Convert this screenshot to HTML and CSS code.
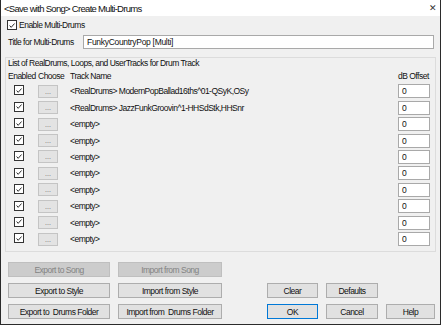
FILE: index.html
```html
<!DOCTYPE html>
<html lang="en">
<head>
    <meta charset="UTF-8">
    <title>Create Multi-Drums</title>
    <link rel="stylesheet" href="styles.css">
</head>
<body>
    <div class="window">
        <div class="titlebar">
            <span>&lt;Save with Song&gt; Create Multi-Drums</span>
            <span class="close">&#x2715;</span>
        </div>
        <div class="content">
            <div class="enable-row">
                <span class="check"><svg viewBox="0 0 10 10" width="10" height="10"><path d="M2 5 L4 7.3 L8.2 2.5" fill="none" stroke="#222" stroke-width="1.2"/></svg></span>
                <span>Enable Multi-Drums</span>
            </div>
            <div class="title-row">
                <span class="title-label">Title for Multi-Drums</span>
                <div class="field wide">FunkyCountryPop [Multi]</div>
            </div>
            <div class="group">
                <div class="group-label">List of RealDrums, Loops, and UserTracks for Drum Track</div>
                <div class="track-grid" id="track-grid">
                    <div class="head">Enabled</div>
                    <div class="head">Choose</div>
                    <div class="head">Track Name</div>
                    <div class="head">dB Offset</div>
                </div>
            </div>
            <div class="buttons">
                <button class="btn disabled">Export to Song</button>
                <button class="btn disabled">Import from Song</button>
                <span></span><span></span><span></span><span></span>

                <button class="btn">Export to Style</button>
                <button class="btn">Import from Style</button>
                <span></span>
                <button class="btn">Clear</button>
                <button class="btn">Defaults</button>
                <span></span>

                <button class="btn">Export to&nbsp; Drums Folder</button>
                <button class="btn">Import from&nbsp; Drums Folder</button>
                <span></span>
                <button class="btn default">OK</button>
                <button class="btn">Cancel</button>
                <button class="btn">Help</button>
            </div>
        </div>
    </div>

    <script>
        const tracks = [
            "<RealDrums> ModernPopBallad16ths^01-QSyK,OSy",
            "<RealDrums> JazzFunkGroovin^1-HHSdStk,HHSnr",
            "<empty>", "<empty>", "<empty>", "<empty>",
            "<empty>", "<empty>", "<empty>", "<empty>"
        ];
        const grid = document.getElementById("track-grid");
        const checkSvg = '<svg viewBox="0 0 10 10" width="10" height="10"><path d="M2 5 L4 7.3 L8.2 2.5" fill="none" stroke="#222" stroke-width="1.2"/></svg>';

        tracks.forEach(name => {
            const en = document.createElement("div");
            en.className = "cell-check";
            en.innerHTML = '<span class="check">' + checkSvg + '</span>';
            grid.appendChild(en);

            const choose = document.createElement("div");
            choose.innerHTML = '<span class="choose">...</span>';
            grid.appendChild(choose);

            const tn = document.createElement("div");
            tn.className = "track-name";
            tn.textContent = name;
            grid.appendChild(tn);

            const db = document.createElement("div");
            db.innerHTML = '<div class="field db">0</div>';
            grid.appendChild(db);
        });
    </script>
</body>
</html>
```

FILE: styles.css
```css
body {
    margin: 0;
    font-family: "Liberation Sans", Arial, sans-serif;
    font-size: 8.5px;
    letter-spacing: -0.5px;
    color: #111;
    background: #fff;
}
.window {
    width: 441px;
    height: 325px;
    box-sizing: border-box;
    border: 1px solid #2b2b2b;
    border-top: none;
    background: #f0f0f0;
    display: flex;
    flex-direction: column;
}
.titlebar {
    height: 16px;
    flex: none;
    background: #fff;
    display: flex;
    align-items: center;
    justify-content: space-between;
    padding: 0 4px 0 3px;
    font-size: 9.5px;
    letter-spacing: -0.7px;
}
.close {
    font-size: 9px;
    color: #333;
}
.content {
    padding: 3px 4px 0 4px;
}
.enable-row {
    display: flex;
    align-items: center;
    gap: 2px;
    height: 12px;
    padding-left: 2px;
}
.check {
    display: inline-flex;
    width: 10px;
    height: 10px;
    box-sizing: border-box;
    border: 1px solid #333;
    background: #fff;
    align-items: center;
    justify-content: center;
}
.check svg {
    width: 9px;
    height: 9px;
}
.title-row {
    display: flex;
    align-items: center;
    margin-top: 4px;
    height: 14px;
}
.title-label {
    width: 75px;
    padding-left: 3px;
    white-space: nowrap;
}
.field {
    box-sizing: border-box;
    height: 14px;
    border: 1px solid #a9a9a9;
    background: #fff;
    padding: 0 3px;
    line-height: 12px;
    letter-spacing: -0.3px;
}
.wide {
    flex: 1;
    margin-right: 2px;
}
.group {
    margin-top: 8px;
    border: 1px solid #dcdcdc;
    height: 195px;
    box-sizing: border-box;
    padding: 0 2px;
}
.group-label {
    height: 11px;
    white-space: nowrap;
}
.track-grid {
    display: grid;
    grid-template-columns: 30px 32px 1fr 35px;
    grid-template-rows: 14px repeat(10, 16.45px);
    align-items: center;
}
.head {
    white-space: nowrap;
}
.cell-check {
    padding-left: 6px;
}
.choose {
    display: flex;
    width: 20px;
    height: 13px;
    box-sizing: border-box;
    border: 1px solid #c4c4c4;
    background: #e3e3e3;
    color: #666;
    font-size: 7px;
    letter-spacing: 0;
    justify-content: center;
    align-items: center;
}
.track-name {
    white-space: nowrap;
    overflow: hidden;
}
.db {
    width: 32px;
}
.buttons {
    display: grid;
    grid-template-columns: 102px 104px 29px 51px 52px 49px;
    grid-template-rows: repeat(3, 15px);
    column-gap: 8px;
    row-gap: 6px;
    margin-top: 10px;
    padding-left: 3px;
}
.btn {
    font: inherit;
    letter-spacing: inherit;
    margin: 0;
    padding: 0;
    background: #e1e1e1;
    border: 1px solid #adadad;
    color: #111;
    white-space: nowrap;
}
.btn.disabled {
    background: #cccccc;
    border-color: #bfbfbf;
    color: #838383;
}
.btn.default {
    border-color: #0078d7;
}
```
